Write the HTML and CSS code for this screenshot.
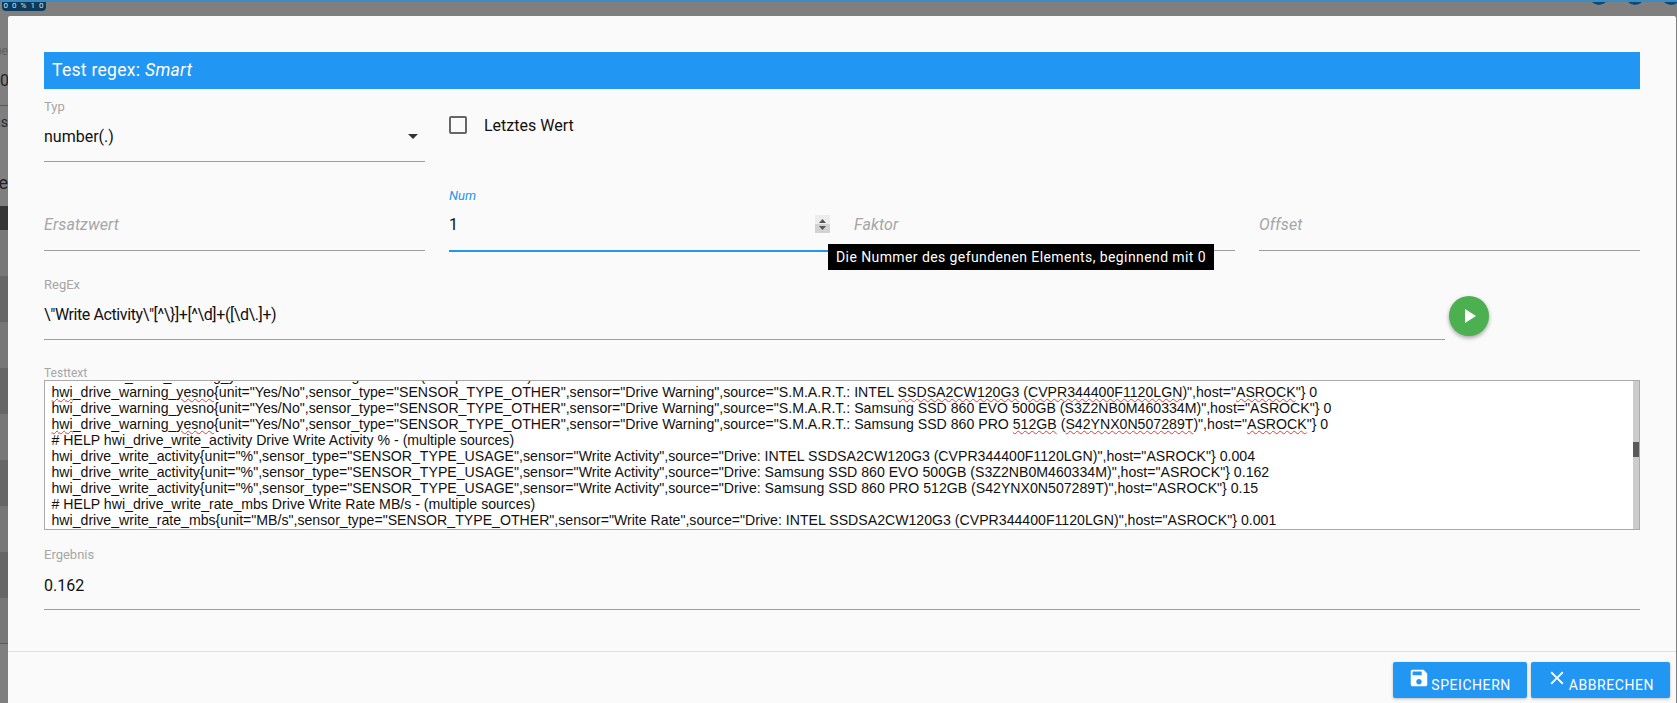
FILE: index.html
```html
<!DOCTYPE html>
<html lang="de">
<head>
<meta charset="utf-8">
<title>Test regex</title>
<link rel="stylesheet" href="styles.css">
</head>
<body>
<div class="scene">
  <div class="top">
    <div class="logo">0 0 % 1 0</div>
    <div class="top-icons"><i></i><i></i><i></i></div>
  </div>
  <div class="side">
    <div class="s-label">Type</div>
    <div class="s-value">0</div>
    <div class="s-line"></div>
    <div class="s-small">ns</div>
    <div class="s-head">Re</div>
    <div class="s-band"></div>
    <div class="s-row"></div>
    <div class="s-row s-dark"></div>
    <div class="s-row"></div>
    <div class="s-row s-dark"></div>
    <div class="s-row"></div>
    <div class="s-row s-dark"></div>
    <div class="s-row"></div>
    <div class="s-row s-dark"></div>
    <div class="s-row s-last"></div>
  </div>
</div>

<div class="dialog">
  <div class="content">
    <div class="title">Test regex: <em>Smart</em></div>

    <div class="grid row-first">
      <div class="field">
        <div class="label">Typ</div>
        <div class="value lower">number(.)<span class="arrow"></span></div>
      </div>
      <div class="check">
        <span class="box"></span>
        <span class="check-label">Letztes Wert</span>
      </div>
    </div>

    <div class="grid row-next">
      <div class="field">
        <div class="label"></div>
        <div class="value hint">Ersatzwert</div>
      </div>
      <div class="field focused">
        <div class="label">Num</div>
        <div class="value">1
          <svg class="spin" width="15" height="18" viewBox="0 0 15 18"><rect width="15" height="18" fill="#ececec"/><rect y="9" width="15" height="9" fill="#d2d2d2"/><path d="M7.5 4l3.5 4H4z" fill="#555"/><path d="M7.5 15l3.5-4H4z" fill="#555"/></svg>
        </div>
        <div class="tooltip">Die Nummer des gefundenen Elements, beginnend mit 0</div>
      </div>
      <div class="field">
        <div class="label"></div>
        <div class="value hint">Faktor</div>
      </div>
      <div class="field">
        <div class="label"></div>
        <div class="value hint">Offset</div>
      </div>
    </div>

    <div class="regex-row">
      <div class="field grow">
        <div class="label">RegEx</div>
        <div class="value lower regex">\"Write Activity\"[^\}]+[^\d]+([\d\.]+)</div>
      </div>
      <button class="fab" type="button" aria-label="Test"><svg width="24" height="24" viewBox="0 0 24 24"><path d="M8 5v14l11-7z" fill="#fff"/></svg></button>
    </div>

    <div class="ta-label">Testtext</div>
    <div class="ta">
      <div class="ta-text">
        <div class="ta-lines">
          <div># HELP hwi_drive_warning_yesno Drive Warning Yes/No - (multiple sources)</div>
          <div><span class="sp">hwi</span>_drive_warning_<span class="sp">yesno</span>{unit="Yes/No",sensor_type="SENSOR_TYPE_OTHER",sensor="Drive Warning",source="S.M.A.R.T.: INTEL <span class="sp">SSDSA2CW120G3</span> (<span class="sp">CVPR344400F1120LGN</span>)",host="<span class="sp">ASROCK</span>"} 0</div>
          <div>hwi_drive_warning_yesno{unit="Yes/No",sensor_type="SENSOR_TYPE_OTHER",sensor="Drive Warning",source="S.M.A.R.T.: Samsung SSD 860 EVO 500GB (S3Z2NB0M460334M)",host="ASROCK"} 0</div>
          <div><span class="sp">hwi</span>_drive_warning_<span class="sp">yesno</span>{unit="Yes/No",sensor_type="SENSOR_TYPE_OTHER",sensor="Drive Warning",source="S.M.A.R.T.: Samsung SSD 860 PRO <span class="sp">512GB</span> (<span class="sp">S42YNX0N507289T</span>)",host="<span class="sp">ASROCK</span>"} 0</div>
          <div># HELP hwi_drive_write_activity Drive Write Activity % - (multiple sources)</div>
          <div>hwi_drive_write_activity{unit="%",sensor_type="SENSOR_TYPE_USAGE",sensor="Write Activity",source="Drive: INTEL SSDSA2CW120G3 (CVPR344400F1120LGN)",host="ASROCK"} 0.004</div>
          <div>hwi_drive_write_activity{unit="%",sensor_type="SENSOR_TYPE_USAGE",sensor="Write Activity",source="Drive: Samsung SSD 860 EVO 500GB (S3Z2NB0M460334M)",host="ASROCK"} 0.162</div>
          <div>hwi_drive_write_activity{unit="%",sensor_type="SENSOR_TYPE_USAGE",sensor="Write Activity",source="Drive: Samsung SSD 860 PRO 512GB (S42YNX0N507289T)",host="ASROCK"} 0.15</div>
          <div># HELP hwi_drive_write_rate_mbs Drive Write Rate MB/s - (multiple sources)</div>
          <div>hwi_drive_write_rate_mbs{unit="MB/s",sensor_type="SENSOR_TYPE_OTHER",sensor="Write Rate",source="Drive: INTEL SSDSA2CW120G3 (CVPR344400F1120LGN)",host="ASROCK"} 0.001</div>
        </div>
      </div>
      <div class="scrollbar"><div class="thumb"></div></div>
    </div>

    <div class="field result">
      <div class="label">Ergebnis</div>
      <div class="value">0.162</div>
    </div>
  </div>

  <div class="footer">
    <button class="btn" type="button">
      <svg width="22" height="22" viewBox="0 0 24 24"><path d="M17 3H5c-1.11 0-2 .9-2 2v14c0 1.1.89 2 2 2h14c1.1 0 2-.9 2-2V7l-4-4zm-5 16c-1.66 0-3-1.34-3-3s1.34-3 3-3 3 1.34 3 3-1.34 3-3 3zm3-10H5V5h10v4z" fill="#fff"/></svg>
      <span>SPEICHERN</span>
    </button>
    <button class="btn" type="button">
      <svg width="22" height="22" viewBox="0 0 24 24"><path d="M19 6.41L17.59 5 12 10.59 6.41 5 5 6.41 10.59 12 5 17.59 6.41 19 12 13.41 17.59 19 19 17.59 13.41 12z" fill="#fff"/></svg>
      <span>ABBRECHEN</span>
    </button>
  </div>
</div>
</body>
</html>
```

FILE: styles.css
```css
* { box-sizing: border-box; }
html, body { margin: 0; height: 703px; overflow: hidden; }
body { font-family: Roboto, "Liberation Sans", sans-serif; background: #7f7f7f; position: relative; }

/* page behind the modal */
.scene { height: 703px; overflow: hidden; }
.top {
  height: 16px;
  border-top: 2px solid #3d8cc0;
  display: flex;
  justify-content: space-between;
  overflow: hidden;
}
.logo {
  margin-left: 2px;
  width: 44px;
  height: 9px;
  background: #0c3a5c;
  border-radius: 0 0 4px 4px;
  color: #cfe3ee;
  font-size: 8px;
  line-height: 8px;
  letter-spacing: 1px;
  text-align: center;
  white-space: nowrap;
  overflow: hidden;
}
.top-icons { display: flex; gap: 16px; margin-right: -4px; }
.top-icons i {
  display: block;
  width: 20px;
  height: 20px;
  margin-top: -17px;
  border-radius: 50%;
  background: #0d4a77;
}
.side { width: 8px; overflow: hidden; display: flex; flex-direction: column; align-items: flex-end; }
.side > div { white-space: nowrap; }
.s-label { font-size: 12px; line-height: 14px; margin-top: 28px; color: #5e5e5e; }
.s-value { font-size: 16px; line-height: 20px; margin-top: 13px; color: #222; width: 8px; text-align: right; }
.s-line { width: 8px; height: 1px; margin-top: 14px; background: #5a5a5a; }
.s-small { font-size: 14px; line-height: 16px; margin-top: 8px; color: #2a2a2a; }
.s-head { font-size: 18px; line-height: 22px; margin-top: 42px; color: #222; }
.s-band { width: 8px; height: 24px; margin-top: 12px; background: #353535; }
.s-row { width: 8px; height: 46px; background: #777; }
.s-dark { background: #666; }
.s-last { border-bottom: 1px solid #5c5c5c; }

/* modal */
.dialog {
  position: absolute;
  left: 8px;
  top: 16px;
  width: 1668px;
  height: 687px;
  background: #fafafa;
  border-radius: 2px 2px 0 0;
  display: flex;
  flex-direction: column;
}
.content { flex: 1; padding: 36px 36px 0; }
.title {
  height: 37px;
  padding-left: 8px;
  background: #2196f3;
  color: #fff;
  font-size: 17.5px;
  line-height: 37px;
  letter-spacing: .3px;
}
.grid { display: grid; grid-template-columns: repeat(4, 381px); column-gap: 24px; }
.row-first { margin-top: 12px; }
.row-next { margin-top: 28px; }

.field { position: relative; border-bottom: 1px solid #9e9e9e; height: 61px; }
.label { height: 14px; font-size: 13px; line-height: 12px; color: #a6a6a6; }
.value {
  margin-top: 9px;
  height: 24px;
  font-size: 16px;
  line-height: 24px;
  color: #111;
  display: flex;
  justify-content: space-between;
  align-items: center;
}
.lower { margin-top: 10px; }
.regex { letter-spacing: -.4px; }
.hint { font-style: italic; color: #a6a6a6; letter-spacing: .1px; }
.arrow {
  width: 0;
  height: 0;
  margin: -2px 7px 0 0;
  border-left: 5px solid transparent;
  border-right: 5px solid transparent;
  border-top: 5px solid #333;
}
.focused { border-bottom: 2px solid #2196f3; height: 62px; margin-bottom: -1px; }
.focused .label { color: #2196f3; font-style: italic; }
.spin { margin-top: -3px; }
.tooltip {
  position: absolute;
  left: 379px;
  top: 54px;
  height: 26px;
  padding: 0 8px;
  background: #000;
  color: #fff;
  font-size: 14px;
  line-height: 26px;
  letter-spacing: .41px;
  white-space: nowrap;
  z-index: 2;
}

.check { display: flex; align-items: center; height: 18px; margin-top: 15px; }
.box { width: 18px; height: 18px; border: 2px solid #666; border-radius: 2px; }
.check-label { margin: 2px 0 0 17px; font-size: 16px; line-height: 18px; color: #111; }

.regex-row { display: flex; margin-top: 28px; padding-right: 151px; }
.grow { flex: 1; }
.fab {
  width: 40px;
  height: 40px;
  margin: 17px 0 0 4px;
  padding: 0;
  border: 0;
  border-radius: 50%;
  background: #4caf50;
  box-shadow: 0 2px 4px rgba(0,0,0,.35);
  display: flex;
  align-items: center;
  justify-content: center;
}

.ta-label { margin-top: 26px; height: 14px; font-size: 12px; line-height: 14px; color: #a6a6a6; }
.ta {
  height: 150px;
  border: 1px solid #aaa;
  background: #fff;
  display: flex;
}
.ta-text { flex: 1; overflow: hidden; padding-left: 6.5px; }
.ta-lines {
  margin-top: -13px;
  font-family: "Liberation Sans", Arial, sans-serif;
  font-size: 14.13px;
  line-height: 16px;
  color: #111;
  white-space: nowrap;
}
.sp { text-decoration: underline wavy #e8383b 1px; text-underline-offset: 1px; }
.scrollbar { width: 6px; background: #ccc; }
.thumb { width: 6px; height: 15px; margin-top: 61px; background: #5a5a5a; }

.result { margin-top: 19px; }
.result .value { margin-top: 11px; }

.footer {
  height: 52px;
  border-top: 1px solid #e0e0e0;
  padding: 10px 6px 0 0;
  display: flex;
  justify-content: flex-end;
  gap: 4px;
}
.btn {
  height: 36px;
  padding: 0 16px 0 15px;
  border: 0;
  border-radius: 2px;
  background: #2196f3;
  color: #fff;
  font-family: Roboto, sans-serif;
  font-size: 14px;
  line-height: 16px;
  letter-spacing: .55px;
  box-shadow: 0 1px 3px rgba(0,0,0,.25);
  display: flex;
  align-items: center;
}
.btn svg { margin-top: -5px; }
.btn span { margin-top: 9px; margin-left: 1px; }
```
